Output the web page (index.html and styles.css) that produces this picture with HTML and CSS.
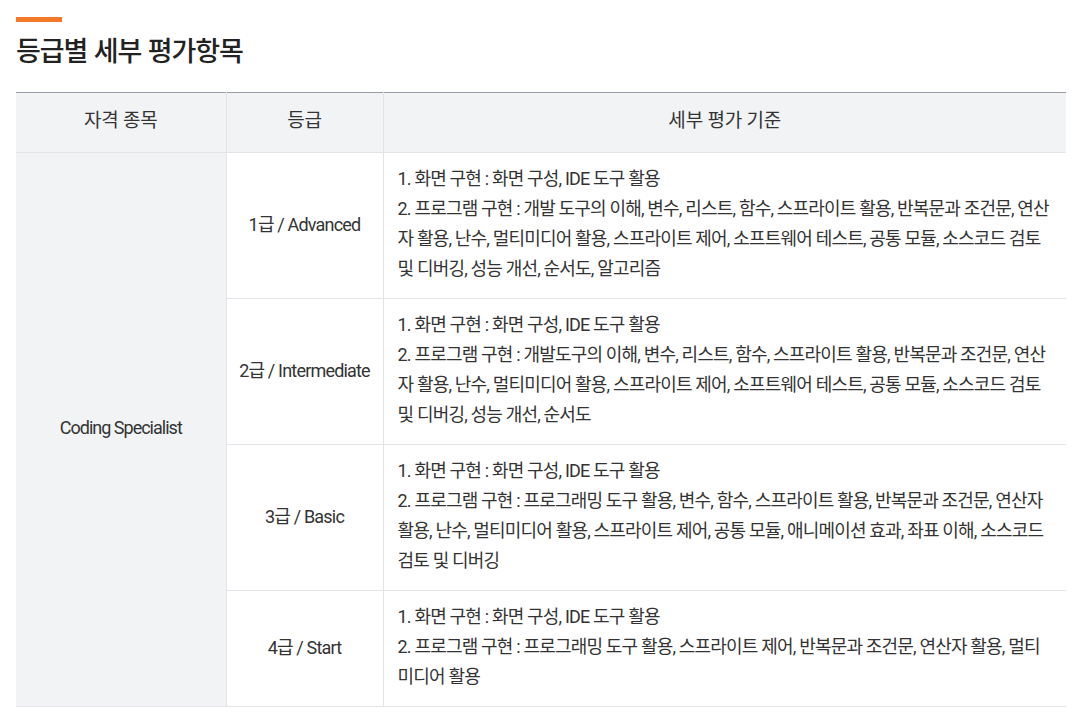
FILE: index.html
```html
<!DOCTYPE html>
<html lang="ko">
<head>
<meta charset="utf-8">
<title>등급별 세부 평가항목</title>
<link rel="stylesheet" href="styles.css">
</head>
<body>
<section class="section">
  <div class="bar"></div>
  <h2 class="title">등급별 세부 평가항목</h2>
  <table class="grade-table">
    <colgroup>
      <col class="c1">
      <col class="c2">
      <col class="c3">
    </colgroup>
    <thead>
      <tr>
        <th>자격 종목</th>
        <th>등급</th>
        <th>세부 평가 기준</th>
      </tr>
    </thead>
    <tbody>
      <tr class="r4">
        <td class="kind" rowspan="4">Coding Specialist</td>
        <td class="grade">1급 / Advanced</td>
        <td class="desc">1. 화면 구현 : 화면 구성, IDE 도구 활용<br>2. 프로그램 구현 : 개발 도구의 이해, 변수, 리스트, 함수, 스프라이트 활용, 반복문과 조건문, 연산자 활용, 난수, 멀티미디어 활용, 스프라이트 제어, 소프트웨어 테스트, 공통 모듈, 소스코드 검토 및 디버깅, 성능 개선, 순서도, 알고리즘</td>
      </tr>
      <tr>
        <td class="grade">2급 / Intermediate</td>
        <td class="desc">1. 화면 구현 : 화면 구성, IDE 도구 활용<br>2. 프로그램 구현 : 개발도구의 이해, 변수, 리스트, 함수, 스프라이트 활용, 반복문과 조건문, 연산자 활용, 난수, 멀티미디어 활용, 스프라이트 제어, 소프트웨어 테스트, 공통 모듈, 소스코드 검토 및 디버깅, 성능 개선, 순서도</td>
      </tr>
      <tr>
        <td class="grade">3급 / Basic</td>
        <td class="desc">1. 화면 구현 : 화면 구성, IDE 도구 활용<br>2. 프로그램 구현 : 프로그래밍 도구 활용, 변수, 함수, 스프라이트 활용, 반복문과 조건문, 연산자 활용, 난수, 멀티미디어 활용, 스프라이트 제어, 공통 모듈, 애니메이션 효과, 좌표 이해, 소스코드 검토 및 디버깅</td>
      </tr>
      <tr>
        <td class="grade">4급 / Start</td>
        <td class="desc">1. 화면 구현 : 화면 구성, IDE 도구 활용<br>2. 프로그램 구현 : 프로그래밍 도구 활용, 스프라이트 제어, 반복문과 조건문, 연산자 활용, 멀티미디어 활용</td>
      </tr>
    </tbody>
  </table>
</section>
</body>
</html>
```

FILE: styles.css
```css
html, body {
  margin: 0;
  padding: 0;
  background: #fff;
}
body {
  font-family: Roboto, "Noto Sans CJK KR", sans-serif;
  color: #333;
}
.section {
  padding: 17px 26px 0 16px;
}
.bar {
  width: 46px;
  height: 5px;
  background: #f47a2a;
}
.title {
  margin: 8px 0 0;
  font-family: "Noto Sans CJK KR", sans-serif;
  font-size: 27px;
  line-height: 40px;
  font-weight: 500;
  letter-spacing: -0.04em;
  color: #222;
}
.grade-table {
  margin-top: 22px;
  width: 100%;
  border-collapse: collapse;
  table-layout: fixed;
  border-top: 1px solid #9a9ca6;
  font-size: 18px;
  letter-spacing: -0.045em;
}
.c1 { width: 210px; }
.c2 { width: 157px; }
.grade-table th {
  padding: 15px 0 19px;
  line-height: 25px;
  background: #f2f3f5;
  font-size: 19px;
  font-weight: 400;
  letter-spacing: -0.01em;
  color: #333;
  border-bottom: 1px solid #e3e4e8;
  border-left: 1px solid #e3e4e8;
  text-align: center;
}
.grade-table th:first-child { border-left: 0; }
.grade-table td {
  border-bottom: 1px solid #e3e4e8;
  border-left: 1px solid #e3e4e8;
  vertical-align: middle;
}
.grade-table td.kind {
  border-left: 0;
  padding: 0 0 4px;
  background: #f2f3f5;
  text-align: center;
  letter-spacing: -0.055em;
}
.grade-table td.grade {
  padding: 0 0 5px;
  text-align: center;
}
.grade-table td.desc {
  padding: 11px 14px 14px 14px;
  line-height: 30px;
  color: #333;
}
```
